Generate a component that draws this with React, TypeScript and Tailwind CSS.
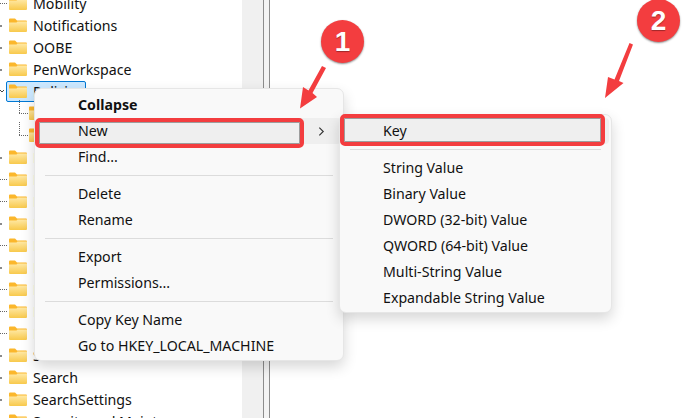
const treeRows = [
  { name: 'Mobility', link: 'line' },
  { name: 'Notifications', link: 'dot' },
  { name: 'OOBE', link: 'dot' },
  { name: 'PenWorkspace', link: 'dot' },
  { name: 'Policies', link: 'open', selected: true },
  { name: 'Explorer', link: 'child' },
  { name: 'System', link: 'child' },
  { name: 'PowerEfficiency', link: 'dot' },
  { name: 'Precision', link: 'line' },
  { name: 'Privacy', link: 'line' },
  { name: 'PushNotifications', link: 'dot' },
  { name: 'Reliability', link: 'line' },
  { name: 'RetailDemo', link: 'dot' },
  { name: 'Run', link: 'line' },
  { name: 'RunOnce', link: 'line' },
  { name: 'Policy', link: 'line' },
  { name: 'Screensavers', link: 'dot' },
  { name: 'Search', link: 'dot' },
  { name: 'SearchSettings', link: 'dot' },
  { name: 'Security and Maintenance', link: 'dot' },
];

function Folder({ className }: { className?: string }) {
  return (
    <svg viewBox="0 0 18 14" className={className}>
      <defs>
        <linearGradient id="folderBody" x1="0" y1="0" x2="0" y2="1">
          <stop offset="0" stopColor="#ffe9a6" />
          <stop offset="1" stopColor="#f8c94c" />
        </linearGradient>
      </defs>
      <path d="M0 1.500a1 1 0 0 1 1-1h5l2 2h9a1 1 0 0 1 1 1V6H0z" fill="#fbb72c" />
      <path d="M0 4.500h7.500l1-1H18V13a1 1 0 0 1-1 1H1a1 1 0 0 1-1-1z" fill="url(#folderBody)" />
    </svg>
  );
}

function TreeRow({ name, link, selected }: { name: string; link: string; selected?: boolean }) {
  if (link === 'child') {
    return (
      <div className="h-[22px] flex items-center relative">
        <div className="absolute left-[19px] top-[-2px] h-[13px] border-l border-dotted border-[#666]" />
        <div className="absolute left-[19px] top-[11px] w-[9px] border-t border-dotted border-[#666]" />
        <Folder className="ml-[29px] w-[18px] h-[14px] shrink-0" />
        <span className="ml-[6px] translate-y-px">{name}</span>
      </div>
    );
  }
  return (
    <div className="h-[22px] flex items-center relative">
      {link === 'line' && <div className="absolute left-0 top-[11px] w-[7px] border-t border-dotted border-[#666]" />}
      {link === 'dot' && <div className="absolute left-0 top-[11px] w-[2px] h-[2px] bg-[#8a8a8a]" />}
      {link === 'open' && (
        <svg viewBox="0 0 4 4" className="absolute left-0 top-[9px] w-[4px] h-[4px]">
          <path d="M0 1l2 2 2-2" fill="none" stroke="#444" strokeWidth="1" />
        </svg>
      )}
      {selected && <div className="absolute left-[6px] top-[1px] w-[80px] h-[21px] rounded-[2px] bg-[#cce8ff] border border-[#0078d4]" />}
      <Folder className="relative ml-[9px] w-[18px] h-[14px] shrink-0" />
      <span className="relative ml-[6px] translate-y-px">{name}</span>
    </div>
  );
}

function MenuItem({ label, bold, hover, chevron }: { label: string; bold?: boolean; hover?: boolean; chevron?: boolean }) {
  return (
    <div className={`h-[26px] mx-[2px] pl-[41px] pr-[16px] flex items-center justify-between rounded-[4px] ${hover ? 'bg-[#efefef]' : ''} ${bold ? 'font-bold' : ''}`}>
      <span>{label}</span>
      {chevron && (
        <svg viewBox="0 0 8 12" className="w-[7px] h-[11px]">
          <path d="M1.500 1.500 6 6l-4.500 4.500" fill="none" stroke="#333" strokeWidth="1.300" />
        </svg>
      )}
    </div>
  );
}

function MenuLine() {
  return <div className="h-px bg-[#dcdcdc] mx-[10px] mt-[5px] mb-[5px]" />;
}

function Badge({ n, className }: { n: string; className: string }) {
  return (
    <div className={`absolute w-[43px] h-[43px] rounded-full bg-[#f33d3f] text-white text-[28px] font-bold flex items-center justify-center shadow-[0_1px_2px_rgba(0,0,0,0.45)] [text-shadow:0_1px_1px_rgba(0,0,0,0.35)] font-['Liberation_Sans',sans-serif] ${className}`}>
      {n}
    </div>
  );
}

function Arrow({ className, d }: { className: string; d: string }) {
  return (
    <svg viewBox="0 0 40 70" className={`absolute w-[40px] h-[70px] ${className}`}>
      <path d={d} fill="#f33d3f" />
    </svg>
  );
}

export default function App() {
  return (
    <div className="relative w-[692px] h-[418px] overflow-hidden bg-white text-[14.2px] text-[#111] font-['Noto_Sans','Open_Sans',sans-serif]">
      <div className="flex h-full">
        <div className="w-[242px] shrink-0 -mt-[8px] leading-[22px]">
          {treeRows.map((r) => (
            <TreeRow key={r.name} {...r} />
          ))}
        </div>
        <div className="w-[21px] shrink-0 bg-[#f0f0f0]" />
        <div className="w-[7px] shrink-0 border-x border-[#8c8c8c] bg-[#f3f3f3]" />
        <div className="flex-1" />
      </div>

      {/* context menu */}
      <div className="absolute left-[34px] top-[88px] w-[310px] h-[273px] pt-[3px] rounded-[7px] border border-[#e6e6e6] bg-[#f9f9f9] shadow-[0_6px_14px_rgba(0,0,0,0.16)]">
        <MenuItem label="Collapse" bold />
        <MenuItem label="New" hover chevron />
        <MenuItem label="Find..." />
        <MenuLine />
        <MenuItem label="Delete" />
        <MenuItem label="Rename" />
        <MenuLine />
        <MenuItem label="Export" />
        <MenuItem label="Permissions..." />
        <MenuLine />
        <MenuItem label="Copy Key Name" />
        <MenuItem label="Go to HKEY_LOCAL_MACHINE" />
      </div>

      {/* submenu */}
      <div className="absolute left-[339px] top-[114px] w-[273px] h-[199px] pt-[3px] rounded-[7px] border border-[#e6e6e6] bg-[#f9f9f9] shadow-[0_6px_14px_rgba(0,0,0,0.16)]">
        <MenuItem label="Key" hover />
        <MenuLine />
        <MenuItem label="String Value" />
        <MenuItem label="Binary Value" />
        <MenuItem label="DWORD (32-bit) Value" />
        <MenuItem label="QWORD (64-bit) Value" />
        <MenuItem label="Multi-String Value" />
        <MenuItem label="Expandable String Value" />
      </div>

      {/* annotations */}
      <div className="absolute left-[35px] top-[118px] w-[269px] h-[30px] rounded-[5px] border-[4px] border-[#f33d3f] shadow-[inset_0_0_0_1px_rgba(90,90,90,0.55)]" />
      <div className="absolute left-[340px] top-[114px] w-[265px] h-[32px] rounded-[5px] border-[4px] border-[#f33d3f] shadow-[inset_0_0_0_1px_rgba(90,90,90,0.55)]" />
      <Badge n="1" className="left-[321px] top-[20px]" />
      <Badge n="2" className="left-[637px] top-[-1px]" />
      <Arrow className="left-[295px] top-[62px]" d="M27 4l4 2-13.500 25 4.500 4-17 11.500 3-21.500 5.500 3.500z" />
      <Arrow className="left-[601px] top-[40px]" d="M28.500 3l3.500 1.500-14 36.500 4.500 2-18.500 15 3-21 6.500 2.500z" />
    </div>
  );
}
